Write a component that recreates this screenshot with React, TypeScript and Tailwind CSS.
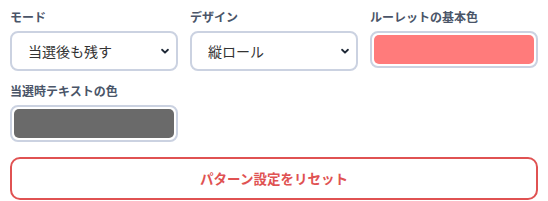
import React, { useState } from 'react';

const font = { fontFamily: '"Noto Sans CJK JP", "Noto Sans", sans-serif' };

// Small chevron drawn in place of the native select arrow
const Chevron = () => (
  <svg viewBox="0 0 12 12" className="pointer-events-none absolute right-[8px] top-1/2 h-[10px] w-[10px] -translate-y-1/2 text-[#1f2937]">
    <path d="M2.5 4.5 6 8l3.5-3.5" fill="none" stroke="currentColor" strokeWidth="2.2" strokeLinecap="round" strokeLinejoin="round" />
  </svg>
);

const Label: React.FC<{ children: React.ReactNode }> = ({ children }) => (
  <div className="mb-[6px] text-[12px] font-bold leading-4 text-[#4a5568]">{children}</div>
);

const SelectBox: React.FC<{ value: string; options: string[]; onChange: (v: string) => void }> = ({ value, options, onChange }) => (
  <div className="relative">
    <select
      value={value}
      onChange={(e) => onChange(e.target.value)}
      className="h-[40px] w-full appearance-none rounded-lg border-2 border-[#cbd2e1] bg-white pl-[16px] pr-8 text-[14px] text-[#333333] outline-none"
      style={font}
    >
      {options.map((o) => (
        <option key={o}>{o}</option>
      ))}
    </select>
    <Chevron />
  </div>
);

const ColorSwatch: React.FC<{ color: string }> = ({ color }) => (
  <div className="h-[37px] w-full rounded-lg border-2 border-[#cbd2e1] bg-white p-[2px]">
    <div className="h-full w-full rounded-[5px]" style={{ backgroundColor: color }} />
  </div>
);

export default function App() {
  const [mode, setMode] = useState('当選後も残す');
  const [design, setDesign] = useState('縦ロール');
  const [baseColor] = useState('#ff7b7b');
  const [textColor] = useState('#6a6a6a');

  return (
    <div className="bg-white px-[10px] pt-[9px]" style={font}>
      <div className="grid grid-cols-3 gap-x-3 gap-y-3">
        <div>
          <Label>モード</Label>
          <SelectBox value={mode} options={['当選後も残す', '当選後に消す']} onChange={setMode} />
        </div>
        <div>
          <Label>デザイン</Label>
          <SelectBox value={design} options={['縦ロール', '円形']} onChange={setDesign} />
        </div>
        <div>
          <Label>ルーレットの基本色</Label>
          <ColorSwatch color={baseColor} />
        </div>
        <div>
          <Label>当選時テキストの色</Label>
          <ColorSwatch color={textColor} />
        </div>
      </div>
      <button className="mt-[15px] h-[43px] w-full rounded-[10px] border-2 border-[#e05252] bg-white text-[13.5px] font-bold text-[#e05252]">
        パターン設定をリセット
      </button>
    </div>
  );
}
